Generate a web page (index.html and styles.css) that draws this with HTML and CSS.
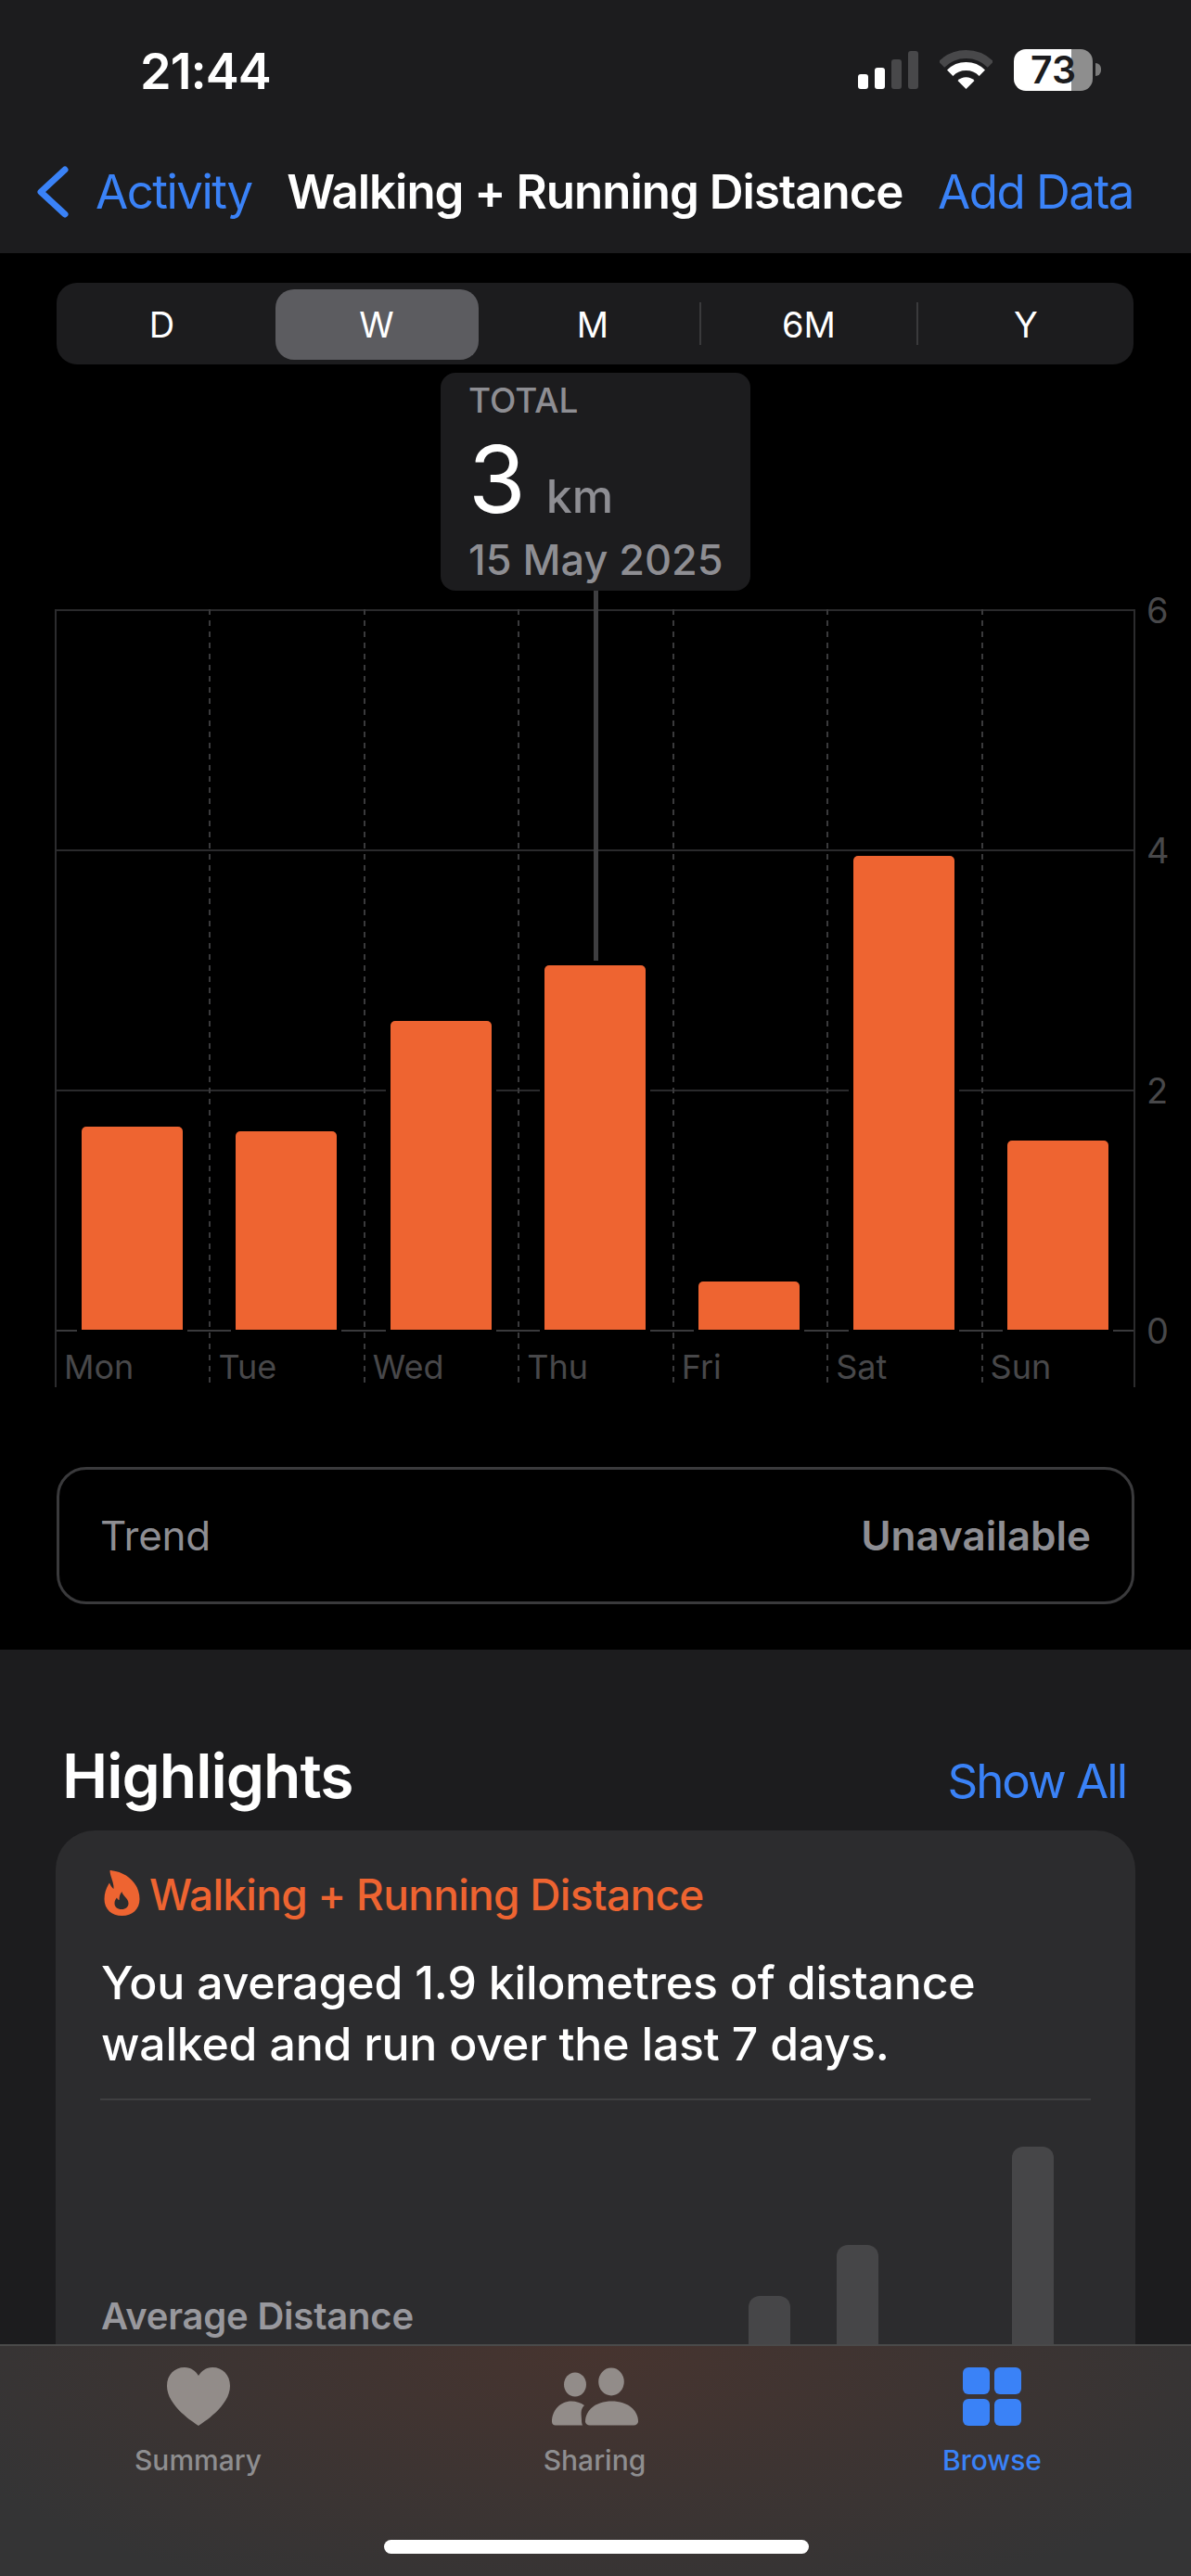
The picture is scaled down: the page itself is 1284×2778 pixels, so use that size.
FILE: index.html
```html
<!DOCTYPE html>
<html lang="en">
<head>
<meta charset="utf-8">
<title>Walking + Running Distance</title>
<link rel="stylesheet" href="styles.css">
</head>
<body>
<div class="phone">
  <header class="header">
    <div class="status">
      <span class="time">21:44</span>
      <div class="status-icons">
        <div class="signal">
          <i class="sig s1"></i><i class="sig s2"></i><i class="sig s3"></i><i class="sig s4"></i>
        </div>
        <svg class="wifi" viewBox="0 0 57 42">
          <path d="M2 15.5A37.5 37.5 0 0 1 55 15.5" fill="none" stroke="#48484a" stroke-width="9"/>
          <path d="M11.2 24.7A24.5 24.5 0 0 1 45.8 24.7" fill="none" stroke="#fff" stroke-width="9"/>
          <path d="M28.5 42L19.5 33A12.7 12.7 0 0 1 37.5 33Z" fill="#fff"/>
        </svg>
        <div class="battery"><span class="battery-text">73</span></div>
        <i class="battery-nub"></i>
      </div>
    </div>
    <nav class="nav">
      <div class="nav-back">
        <svg class="chevron" viewBox="0 0 35 56"><path d="M31 4L5 28L31 52" fill="none" stroke="#3a82f7" stroke-width="7" stroke-linecap="round" stroke-linejoin="round"/></svg>
        <span class="link">Activity</span>
      </div>
      <span class="nav-title">Walking + Running Distance</span>
      <span class="link">Add Data</span>
    </nav>
  </header>

  <main class="main">
    <div class="seg">
      <div class="seg-item c1">D</div>
      <div class="seg-item c2"><span class="seg-pill">W</span></div>
      <div class="seg-item c3">M</div>
      <div class="seg-item c4 sep">6M</div>
      <div class="seg-item c5 sep">Y</div>
    </div>

    <div class="chart">
      <div class="hlines">
        <div class="hline"><span class="tick">6</span></div>
        <div class="hline"><span class="tick">4</span></div>
        <div class="hline"><span class="tick">2</span></div>
        <div class="hline base"><span class="tick">0</span></div>
      </div>
      <div class="days">
        <div class="day first"><div class="plot"><div class="bar" style="height:219px"></div></div><span class="day-label">Mon</span></div>
        <div class="day"><div class="plot"><div class="bar" style="height:214px"></div></div><span class="day-label">Tue</span></div>
        <div class="day"><div class="plot"><div class="bar" style="height:333px"></div></div><span class="day-label">Wed</span></div>
        <div class="day"><div class="plot"><div class="bar" style="height:393px"></div></div><span class="day-label">Thu</span></div>
        <div class="day"><div class="plot"><div class="bar" style="height:52px"></div></div><span class="day-label">Fri</span></div>
        <div class="day"><div class="plot"><div class="bar" style="height:511px"></div></div><span class="day-label">Sat</span></div>
        <div class="day last"><div class="plot"><div class="bar" style="height:204px"></div></div><span class="day-label">Sun</span></div>
      </div>
      <div class="tip-line"></div>
      <div class="tooltip">
        <div class="tip-total">TOTAL</div>
        <div class="tip-value"><span class="tip-num">3</span><span class="tip-unit">km</span></div>
        <div class="tip-date">15 May 2025</div>
      </div>
    </div>

    <div class="trend">
      <span class="trend-label">Trend</span>
      <span class="trend-value">Unavailable</span>
    </div>
  </main>

  <section class="lower">
    <div class="section-head">
      <h2 class="section-title">Highlights</h2>
      <span class="link show-all">Show All</span>
    </div>
    <article class="card">
      <div class="card-head">
        <svg class="flame" viewBox="0 0 38 49"><path fill="#ee6431" fill-rule="evenodd" d="M6 .5C6 0 7 0 8 .2C24 2 38 14 38 31C38 42 30 49 19 49C8 49 0 42 0 31C0 24 2.500 18 5.500 13.500C6.500 16 8 18.500 10 20C10.500 13 6 6 6 .5ZM19 23C19 27 26 30 26 35.500C26 39.500 23 42 18.500 42C14 42 11 39.500 11 35.500C11 33 12 31 13.500 29.500C14 31 15 32 16 32C16 28 17 25 19 23Z"/></svg>
        <span class="card-title">Walking + Running Distance</span>
      </div>
      <p class="card-body">You averaged 1.9 kilometres of distance walked and run over the last 7 days.</p>
      <div class="divider"></div>
      <div class="card-chart">
        <span class="avg-label">Average Distance</span>
        <div class="mini-bars">
          <i class="mini m1"></i><i class="mini m2"></i><i class="mini m3"></i>
        </div>
      </div>
    </article>
  </section>

  <footer class="tabbar">
    <div class="tabs">
      <div class="tab">
        <svg class="tab-icon heart" viewBox="0 0 68 63"><path fill="#928c89" d="M34 63C30 60 0 42 0 20C0 8 8 0 19 0C26 0 31 4 34 9C37 4 42 0 49 0C60 0 68 8 68 20C68 42 38 60 34 63Z"/></svg>
        <span class="tab-label">Summary</span>
      </div>
      <div class="tab">
        <svg class="tab-icon people" viewBox="0 0 93 62">
          <ellipse cx="25" cy="18" rx="12" ry="13" fill="#928c89"/>
          <ellipse cx="64" cy="15" rx="13.800" ry="15" fill="#928c89"/>
          <path fill="#928c89" d="M4 62C1.500 62 0 60.500 0 58C0 46 9 36 21 36C26 36 31 37.500 35 40.500C30 45 32 51 32 56.500C32 59 32.500 61 33 62Z"/>
          <path fill="#928c89" d="M41 62C38 62 36 60 36 58C36 46 47 36 64.500 36C82 36 93 46 93 58C93 60 91 62 88 62Z"/>
        </svg>
        <span class="tab-label">Sharing</span>
      </div>
      <div class="tab active">
        <div class="tab-icon grid-icon"><i></i><i></i><i></i><i></i></div>
        <span class="tab-label">Browse</span>
      </div>
    </div>
    <div class="home-indicator"></div>
  </footer>
</div>
</body>
</html>
```

FILE: styles.css
```css
* { box-sizing: border-box; }
html, body { margin: 0; padding: 0; background: #000; }
body { font-family: Inter, "Liberation Sans", sans-serif; color: #fff; }
.phone { position: relative; width: 1284px; height: 2778px; overflow: hidden; background: #1c1c1e; }

/* header */
.header { height: 273px; background: #1c1c1e; }
.status { height: 131px; padding: 47px 0 0 151px; display: flex; justify-content: space-between; }
.time { font-size: 54px; font-weight: 600; line-height: 60px; letter-spacing: -1px; }
.status-icons { display: flex; align-items: flex-start; padding: 6px 106px 0 0; position: relative; }
.signal { display: flex; align-items: flex-end; gap: 7px; height: 41px; margin: 2px 23px 0 0; }
.sig { display: block; width: 11px; border-radius: 3px; background: #fff; }
.s1 { height: 16px; }
.s2 { height: 23px; }
.s3 { height: 32px; background: #48484a; }
.s4 { height: 41px; background: #48484a; }
.wifi { width: 57px; height: 42px; margin: 1px 23px 0 0; }
.battery { width: 85px; height: 45px; border-radius: 13px; background: linear-gradient(to right, #fff 62px, #8e8e8e 62px); display: flex; align-items: center; justify-content: center; }
.battery-text { color: #1c1c1e; font-size: 41px; font-weight: 600; line-height: 45px; }
.battery-nub { position: absolute; right: 97px; top: 21px; width: 6px; height: 14px; border-radius: 0 7px 7px 0; background: #7a7a7a; }

.nav { height: 142px; padding: 46px 62px 0 39px; display: flex; justify-content: space-between; align-items: flex-start; line-height: 60px; }
.nav-back { display: flex; align-items: center; gap: 29px; }
.chevron { width: 35px; height: 56px; }
.link { color: #3a82f7; letter-spacing: -1.5px; font-size: 51px; }
.nav-title { font-weight: 600; font-size: 51px; letter-spacing: -1px; }

/* main */
.main { height: 1506px; background: #000; padding: 32px 60px 0; }
.seg { width: 1161px; height: 88px; margin-left: 1px; border-radius: 22px; background: #1c1c1e; display: grid; grid-template-columns: 227px 236px 230px 234px 234px; align-items: center; font-size: 38px; line-height: 44px; font-weight: 400; }
.seg-item { display: flex; align-items: center; justify-content: center; height: 46px; padding-top: 2px; }
.seg-item.sep { border-left: 2px solid #3a3a3c; }
.seg-pill { width: 219px; height: 76px; flex: none; border-radius: 20px; background: #5c5c60; display: flex; align-items: center; justify-content: center; }

.chart { position: relative; width: 1164px; height: 839px; margin-top: 264px; }
.hlines { position: absolute; left: 0; right: 0; top: 0; }
.hline { position: relative; height: 259px; border-top: 2px solid #2a2a2c; }
.hline.base { height: 0; border-top-color: #3a3a3c; }
.tick { position: absolute; left: 1176px; top: -25px; font-size: 38px; line-height: 48px; color: #48484a; }
.days { position: relative; display: grid; grid-template-columns: repeat(7, 1fr); height: 839px; margin-left: -1px; }
.day { display: flex; flex-direction: column; background: repeating-linear-gradient(to bottom, #3a3a3c 0 6px, transparent 6px 12px) left top / 2px 100% no-repeat; }
.day.first { background: linear-gradient(#2c2c2e, #2c2c2e) left top / 2px 100% no-repeat; }
.day.last { background: repeating-linear-gradient(to bottom, #3a3a3c 0 6px, transparent 6px 12px) left top / 2px 100% no-repeat, linear-gradient(#2c2c2e, #2c2c2e) right top / 2px 100% no-repeat; }
.plot { height: 777px; display: flex; align-items: flex-end; justify-content: center; }
.bar { width: 109px; background: #ee6431; border-radius: 5px 5px 0 0; box-shadow: 0 0 0 5px #000; }
.day-label { padding: 18px 0 0 10px; font-size: 36px; line-height: 44px; color: #48484a; }
.tip-line { position: absolute; left: 580px; top: -20px; width: 5px; height: 399px; background: #3e3e40; }
.tooltip { position: absolute; left: 415px; top: -255px; width: 334px; height: 235px; border-radius: 16px; background: #1c1c1e; padding: 8px 0 0 30px; }
.tip-total { font-size: 37px; line-height: 44px; font-weight: 500; color: #8e8e93; }
.tip-value { display: flex; align-items: baseline; height: 115px; margin-top: 9px; line-height: 108px; }
.tip-num { font-size: 100px; font-weight: 400; margin-right: 22px; }
.tip-unit { font-size: 50px; font-weight: 500; color: #8e8e93; }
.tip-date { font-size: 45px; line-height: 52px; font-weight: 500; color: #8e8e93; }

.trend { width: 1162px; height: 148px; margin: 86px 0 0 1px; border: 3px solid #3a3a3c; border-radius: 32px; display: flex; justify-content: space-between; align-items: center; padding: 0 44px; font-size: 44px; color: #8e8e93; }
.trend-label { font-weight: 400; letter-spacing: -.3px; }
.trend-value { font-weight: 600; }

/* lower */
.lower { padding: 0 60px; }
.section-head { display: flex; justify-content: space-between; align-items: baseline; padding: 88px 10px 0 7px; height: 195px; line-height: 96px; }
.section-title { margin: 0; font-size: 66px; font-weight: 600; letter-spacing: -1px; }
.link.show-all { letter-spacing: -2px; }
.card { height: 700px; border-radius: 42px 42px 0 0; background: #2c2c2e; padding: 40px 48px 0 49px; }
.card-head { display: flex; align-items: flex-end; gap: 10px; height: 52px; }
.flame { width: 39px; height: 49px; margin-left: 3px; }
.card-title { font-size: 46px; line-height: 52px; font-weight: 500; color: #ee6431; letter-spacing: -.7px; margin-bottom: -3px; }
.card-body { margin: 39px 0 0; font-size: 50px; line-height: 66px; font-weight: 500; letter-spacing: -.2px; }
.divider { height: 2px; background: #3f3f41; margin: 26px 0 0 -1px; }
.card-chart { position: relative; height: 500px; }
.avg-label { position: absolute; left: 0; top: 209px; font-size: 40px; line-height: 48px; font-weight: 600; color: #98989d; letter-spacing: -.2px; }
.mini-bars { position: absolute; left: 0; top: 0; height: 300px; width: 100%; }
.mini { position: absolute; bottom: 0; width: 45px; border-radius: 12px 12px 0 0; background: #464648; }
.m1 { left: 698px; height: 89px; }
.m2 { left: 793px; height: 144px; }
.m3 { left: 982px; height: 250px; }

/* tab bar */
.tabbar { position: absolute; left: 0; right: 0; bottom: 0; height: 250px; border-top: 2px solid #4a4a4a; background: radial-gradient(ellipse 760px 300px at 50% 0, rgba(74, 52, 46, .85), rgba(74, 52, 46, 0)), #343435; }
.tabs { display: grid; grid-template-columns: 427px 428px 429px; }
.tab { display: flex; flex-direction: column; align-items: center; }
.tab-icon { display: block; height: 63px; margin-top: 23px; }
.heart { width: 68px; }
.people { width: 93px; }
.grid-icon { width: 63px; display: grid; grid-template-columns: 1fr 1fr; gap: 5px 5px; }
.grid-icon i { display: block; border-radius: 6px; background: #3a82f7; }
.tab-label { font-size: 30px; line-height: 36px; margin-top: 19px; color: #8e8e90; font-weight: 500; }
.tab.active .tab-label { color: #3a82f7; }
.home-indicator { position: absolute; left: 414px; bottom: 24px; width: 458px; height: 15px; border-radius: 8px; background: #fff; }
```
